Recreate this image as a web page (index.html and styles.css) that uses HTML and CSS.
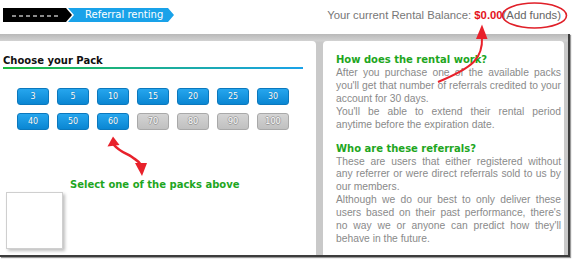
FILE: index.html
```html
<!DOCTYPE html>
<html lang="en">
<head>
    <meta charset="UTF-8">
    <title>Referral renting</title>
    <link rel="stylesheet" href="styles.css">
</head>
<body>
    <div class="page">
        <!-- Breadcrumb + balance -->
        <header class="topbar">
            <nav class="crumbs">
                <span class="crumb crumb-dark"><span class="crumb-mask"></span></span>
                <span class="crumb crumb-blue">Referral renting</span>
            </nav>
            <div class="balance">Your current Rental Balance: <b class="amount">$0.00</b><a class="add-funds">(Add funds)</a></div>
        </header>

        <main class="main">
            <!-- Pack chooser -->
            <section class="panel pack-panel">
                <h2 class="pack-title">Choose your Pack</h2>
                <div class="pack-grid">
                    <button class="pack-btn">3</button>
                    <button class="pack-btn">5</button>
                    <button class="pack-btn">10</button>
                    <button class="pack-btn">15</button>
                    <button class="pack-btn">20</button>
                    <button class="pack-btn">25</button>
                    <button class="pack-btn">30</button>
                    <button class="pack-btn">40</button>
                    <button class="pack-btn">50</button>
                    <button class="pack-btn">60</button>
                    <button class="pack-btn off">70</button>
                    <button class="pack-btn off">80</button>
                    <button class="pack-btn off">90</button>
                    <button class="pack-btn off">100</button>
                </div>
                <p class="pack-hint">Select one of the packs above</p>
                <div class="pack-thumb"></div>

                <svg class="pack-arrow" width="50" height="50" viewBox="100 130 50 50">
                    <path d="M114,145 C120,152 126,153 132,157 C136,160 139,161 141,165" fill="none" stroke="#e8212b" stroke-width="2.6" stroke-linecap="round"/>
                    <polygon points="113,136.5 107.5,146.5 119.5,145" fill="#e8212b"/>
                    <polygon points="135,163 147,163 142,176" fill="#e8212b"/>
                </svg>
            </section>

            <!-- Help text -->
            <section class="panel info-panel">
                <h3 class="info-title">How does the rental work?</h3>
                <p class="info-text">After you purchase one of the available packs you'll get that number of referrals credited to your account for 30 days.<br>You'll be able to extend their rental period anytime before the expiration date.</p>
                <h3 class="info-title gap">Who are these referrals?</h3>
                <p class="info-text">These are users that either registered without any referrer or were direct referrals sold to us by our members.<br>Although we do our best to only deliver these users based on their past performance, there's no way we or anyone can predict how they'll behave in the future.</p>
            </section>
        </main>

        <!-- hand drawn notes on top -->
        <svg class="notes" width="574" height="100" viewBox="0 0 574 100">
            <ellipse cx="534.5" cy="15.5" rx="32" ry="12.5" fill="none" stroke="#e02029" stroke-width="1.6"/>
            <path d="M482,37 C483,58 474,67 438,82" fill="none" stroke="#e8212b" stroke-width="2"/>
            <polygon points="482,24.5 476,39 487.5,39" fill="#e8212b"/>
        </svg>
    </div>
</body>
</html>
```

FILE: styles.css
```css
:root {
    --blue: #19a2e9;
    --green: #1ea61e;
    --frame: #3c3c3c;
    --text-grey: #8a8a8a;
}

body {
    margin: 0;
    background: #fff;
    font-family: 'Liberation Sans', Arial, sans-serif;
}

.page {
    position: relative;
    width: 574px;
    height: 260px;
    overflow: hidden;
}

/* top bar */
.topbar {
    display: flex;
    height: 34px;
}

.crumbs {
    display: flex;
    padding: 8px 0 0 3px;
}

.crumb {
    display: flex;
    align-items: center;
    height: 14px;
    font-family: 'DejaVu Sans', Verdana, sans-serif;
    font-size: 10px;
    line-height: 14px;
    color: #fff;
}

.crumb-dark {
    width: 69px;
    background: #000;
    clip-path: polygon(0 0, calc(100% - 6px) 0, 100% 50%, calc(100% - 6px) 100%, 0 100%);
}

.crumb-mask {
    width: 48px;
    height: 2px;
    margin: 1px 0 0 9px;
    background: repeating-linear-gradient(90deg, #8a8a8a 0 4px, transparent 4px 7px);
}

.crumb-blue {
    width: 89px;
    margin-left: -4px;
    padding-left: 17px;
    background: var(--blue);
    clip-path: polygon(0 0, calc(100% - 6px) 0, 100% 50%, calc(100% - 6px) 100%, 0 100%, 6px 50%);
}

.balance {
    margin-left: auto;
    padding: 8px 13px 0 0;
    font-size: 11.3px;
    line-height: 14px;
    color: #777;
}

.amount {
    color: #e4141c;
}

.add-funds {
    color: #666;
}

/* main frame */
.main {
    box-sizing: border-box;
    display: flex;
    gap: 7px;
    width: 570px;
    height: 223px;
    padding: 7px 4px 0 0;
    background: linear-gradient(#b9b9b9, #d2d2d2 7px, #c9c9c9 8px);
    border-right: 2px solid var(--frame);
    border-bottom: 2px solid var(--frame);
    box-shadow: 1px 1px 1px #999;
    overflow: hidden;
}

.panel {
    background: #fff;
}

.pack-panel {
    position: relative;
    width: 316px;
    padding: 14px 0 0 3px;
    box-sizing: border-box;
    border-radius: 0 4px 0 0;
}

.pack-title {
    width: 300px;
    margin: 0;
    font-family: 'DejaVu Sans', Verdana, sans-serif;
    font-size: 10px;
    line-height: 12px;
    color: #111;
    border-bottom: 2px solid;
    border-image: linear-gradient(90deg, #1bbb3c, #1aa2ea) 1;
}

.pack-grid {
    display: grid;
    grid-template-columns: repeat(7, 32px);
    gap: 8px;
    margin: 19px 0 0 14px;
}

.pack-btn {
    box-sizing: border-box;
    height: 17px;
    padding: 0;
    font-family: 'DejaVu Sans', Verdana, sans-serif;
    font-size: 8px;
    color: #fff;
    text-shadow: 0 0 1px rgba(0, 0, 0, 0.35);
    background: linear-gradient(#26a6ee, #0a86d2);
    border: 1px solid #0b78bd;
    border-radius: 3px;
}

.pack-btn.off {
    color: #fafafa;
    text-shadow: 0 1px 0 #999, 0 -1px 0 #a6a6a6, 1px 0 0 #a6a6a6, -1px 0 0 #a6a6a6;
    background: linear-gradient(#d4d4d4, #c0c0c0);
    border-color: #a9a9a9;
}

.pack-hint {
    margin: 49px 0 0 67px;
    font-family: 'DejaVu Sans', Verdana, sans-serif;
    font-size: 10px;
    font-weight: bold;
    line-height: 12px;
    color: var(--green);
}

.pack-thumb {
    width: 55px;
    height: 55px;
    margin: 1px 0 0 3px;
    border: 1px solid #cfcfcf;
    box-shadow: 2px 2px 3px rgba(0, 0, 0, 0.25);
}

.pack-arrow {
    position: absolute;
    left: 100px;
    top: 89px;
}

.info-panel {
    width: 241px;
    box-sizing: border-box;
    padding: 12px 3px 0 13px;
    border-radius: 4px 4px 0 0;
}

.info-title {
    margin: 0;
    font-family: 'DejaVu Sans', Verdana, sans-serif;
    font-size: 10px;
    line-height: 14px;
    color: var(--green);
}

.info-title.gap {
    margin-top: 10px;
}

.info-text {
    margin: 0;
    font-size: 10.3px;
    line-height: 12.9px;
    color: var(--text-grey);
    text-align: justify;
}

.notes {
    position: absolute;
    left: 0;
    top: 0;
    pointer-events: none;
}
```
